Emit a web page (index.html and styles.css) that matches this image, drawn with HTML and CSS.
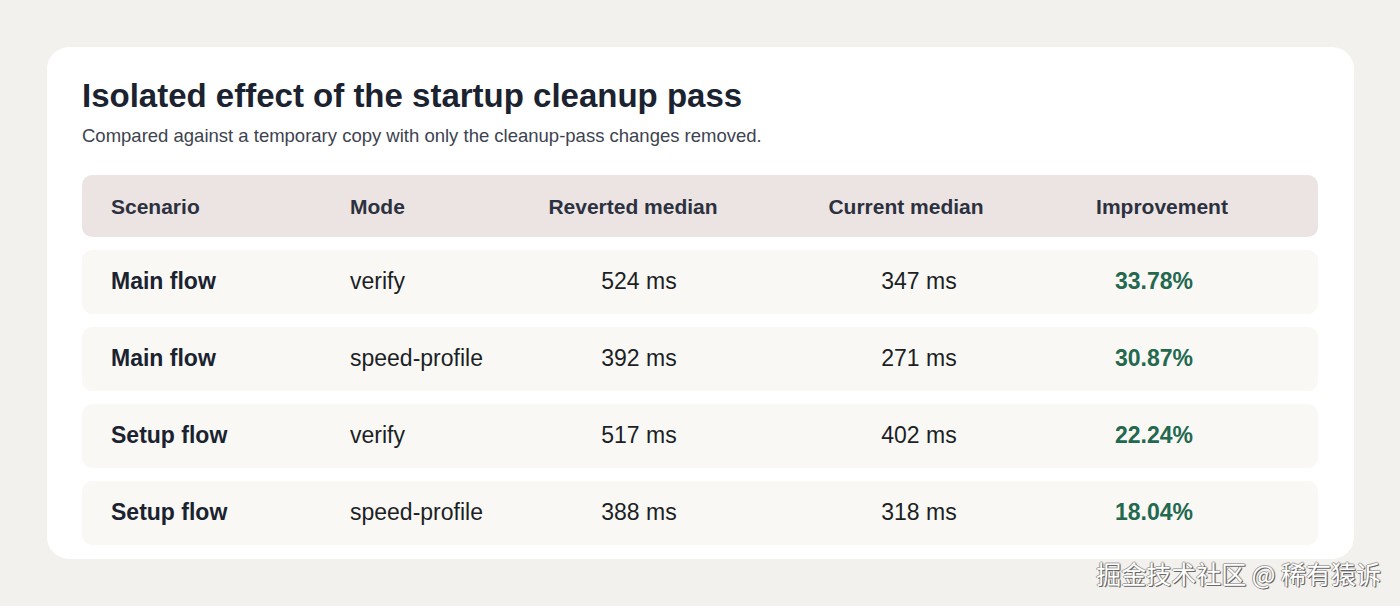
FILE: index.html
```html
<!DOCTYPE html>
<html lang="en">
<head>
<meta charset="utf-8">
<title>Isolated effect of the startup cleanup pass</title>
<link rel="stylesheet" href="styles.css">
</head>
<body>
<main class="card">
  <h1 class="title">Isolated effect of the startup cleanup pass</h1>
  <p class="subtitle">Compared against a temporary copy with only the cleanup-pass changes removed.</p>
  <div class="table">
    <div class="thead">
      <div class="c-scen">Scenario</div>
      <div class="c-mode">Mode</div>
      <div class="c-num">Reverted median</div>
      <div class="c-num">Current median</div>
      <div class="c-num">Improvement</div>
    </div>
    <div class="trow">
      <div class="c-scen strong">Main flow</div>
      <div class="c-mode">verify</div>
      <div class="c-num">524 ms</div>
      <div class="c-num">347 ms</div>
      <div class="c-num gain">33.78%</div>
    </div>
    <div class="trow">
      <div class="c-scen strong">Main flow</div>
      <div class="c-mode">speed-profile</div>
      <div class="c-num">392 ms</div>
      <div class="c-num">271 ms</div>
      <div class="c-num gain">30.87%</div>
    </div>
    <div class="trow">
      <div class="c-scen strong">Setup flow</div>
      <div class="c-mode">verify</div>
      <div class="c-num">517 ms</div>
      <div class="c-num">402 ms</div>
      <div class="c-num gain">22.24%</div>
    </div>
    <div class="trow">
      <div class="c-scen strong">Setup flow</div>
      <div class="c-mode">speed-profile</div>
      <div class="c-num">388 ms</div>
      <div class="c-num">318 ms</div>
      <div class="c-num gain">18.04%</div>
    </div>
  </div>
</main>
<div class="watermark">掘金技术社区 @ 稀有猿诉</div>
</body>
</html>
```
FILE: styles.css
```css
html, body {
  margin: 0;
  padding: 0;
}
body {
  background: #f2f1ee;
  font-family: "Liberation Sans", Arial, sans-serif;
  padding: 47px 46px 0 47px;
  height: 606px;
  box-sizing: border-box;
  position: relative;
  overflow: hidden;
}
.card {
  background: #ffffff;
  border-radius: 22px;
  padding: 29px 36px 14px 35px;
}
.title {
  margin: 0;
  font-size: 33px;
  line-height: 40px;
  font-weight: 700;
  color: #1b2230;
}
.subtitle {
  margin: 8px 0 0 0;
  font-size: 18.5px;
  line-height: 24px;
  color: #3d4350;
}
.table {
  margin-top: 27px;
  display: flex;
  flex-direction: column;
  gap: 13px;
}
.thead,
.trow {
  display: grid;
  align-items: center;
  padding-left: 29px;
  border-radius: 10px;
}
.thead {
  grid-template-columns: 239px 153px 260px 286px 226px;
  height: 62px;
  background: #ece4e3;
  font-size: 21px;
  font-weight: 700;
  color: #2c3140;
}
.thead > div {
  margin-top: 1px;
}
.trow {
  grid-template-columns: 239px 153px 272px 288px 182px;
  height: 64px;
  background: #f9f8f4;
  font-size: 23px;
  color: #1c1f26;
}
.trow > div {
  margin-top: -2px;
}
.c-num {
  text-align: center;
}
.strong {
  font-weight: 700;
  color: #1b2230;
}
.gain {
  font-weight: 700;
  color: #23684f;
}
.watermark {
  position: absolute;
  right: 19px;
  bottom: 19px;
  font-family: "Noto Sans CJK SC", "Liberation Sans", sans-serif;
  font-size: 25px;
  line-height: 28px;
  color: #ffffff;
  text-shadow: 1px 1px 0 #666, -1px 0 0 #999, 0 -1px 0 #aaa, 1px 0 1px #777;
  white-space: nowrap;
}
```
